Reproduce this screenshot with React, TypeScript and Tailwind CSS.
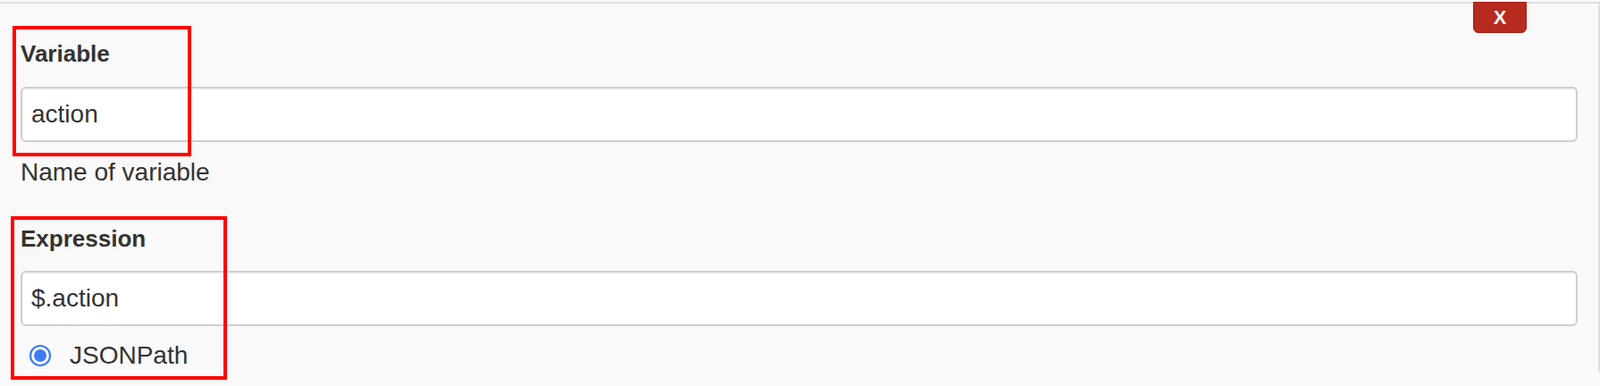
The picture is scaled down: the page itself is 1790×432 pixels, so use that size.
import React from "react";

const Radio = () => (
  <svg width="26" height="26" viewBox="0 0 26 26">
    <circle cx="13" cy="13" r="11" fill="#fff" stroke="#3d7cf4" strokeWidth="2.2" />
    <circle cx="13" cy="13" r="7" fill="#3d7cf4" />
  </svg>
);

export default function App() {
  return (
    <div className="relative h-[432px] w-full overflow-hidden bg-[#f9f9f9] pt-[2px] font-['Liberation_Sans',Arial,sans-serif] text-[#333]">
      <div className="relative border-t-2 border-r-2 border-[#dedede] bg-[#f9f9f9] pl-[23px] pr-[23px] pt-[38px]">
        <button className="absolute right-[80px] top-[-2px] flex h-[35px] w-[60px] items-center justify-center rounded-b-[6px] border border-[#a3241a] bg-[#b72a1e] text-[22px] font-bold leading-none text-[#f3f3f3]">
          X
        </button>

        <label className="block text-[26px] font-bold leading-[36px]">Variable</label>
        <input
          readOnly
          value="action"
          className="mt-[19px] block h-[62px] w-full rounded-[6px] border-2 border-[#cfcfcf] bg-white px-[10px] text-[28px] text-[#333] shadow-[inset_0_1px_2px_rgba(0,0,0,0.08)] outline-none"
        />
        <div className="mt-[16px] text-[28px] leading-[36px]">Name of variable</div>

        <label className="mt-[38px] block text-[26px] font-bold leading-[36px]">Expression</label>
        <input
          readOnly
          value="$.action"
          className="mt-[18px] block h-[62px] w-full rounded-[6px] border-2 border-[#cfcfcf] bg-white px-[10px] text-[28px] text-[#333] shadow-[inset_0_1px_2px_rgba(0,0,0,0.08)] outline-none"
        />
        <div className="mt-[15px] flex h-[36px] items-center gap-[20px] pl-[9px]">
          <Radio />
          <span className="text-[28px] leading-[36px]">JSONPath</span>
        </div>
      </div>

      {/* annotation boxes */}
      <div className="pointer-events-none absolute left-[14px] top-[29px] h-[146px] w-[200px] border-[4px] border-[#ff0000]" />
      <div className="pointer-events-none absolute left-[12px] top-[242px] h-[183px] w-[242px] border-[4px] border-[#ff0000]" />
    </div>
  );
}
